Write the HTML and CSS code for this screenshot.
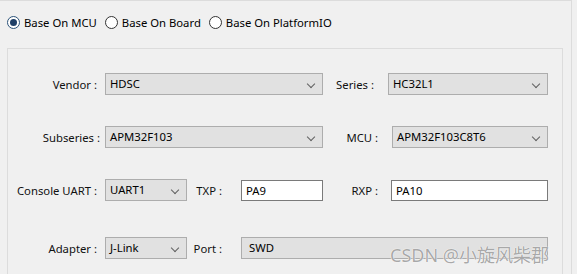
FILE: index.html
```html
<!DOCTYPE html>
<html>
<head>
<meta charset="utf-8">
<link rel="stylesheet" href="styles.css">
</head>
<body>
<div class="outer">
  <div class="radios">
    <label class="radio"><span class="dot checked"></span>Base On MCU</label>
    <label class="radio"><span class="dot"></span>Base On Board</label>
    <label class="radio"><span class="dot"></span>Base On PlatformIO</label>
  </div>
  <div class="group">
    <div class="row r1">
      <span class="lbl w89">Vendor :</span>
      <div class="select ml8 w218">HDSC<i class="chev"></i></div>
      <span class="lbl w51">Series :</span>
      <div class="select ml14 w160">HC32L1<i class="chev"></i></div>
    </div>
    <div class="row r2">
      <span class="lbl w92">Subseries :</span>
      <div class="select ml5 w218">APM32F103<i class="chev"></i></div>
      <span class="lbl w55">MCU :</span>
      <div class="select ml14 w156">APM32F103C8T6<i class="chev"></i></div>
    </div>
    <div class="row r3">
      <span class="lbl w89">Console UART :</span>
      <div class="select ml8 w82">UART1<i class="chev"></i></div>
      <span class="lbl w35">TXP :</span>
      <div class="input ml19 w82">PA9</div>
      <span class="lbl w55">RXP :</span>
      <div class="input ml13 w157">PA10</div>
    </div>
    <div class="row r4">
      <span class="lbl w89">Adapter :</span>
      <div class="select ml8 w82">J-Link<i class="chev"></i></div>
      <span class="lbl w35">Port :</span>
      <div class="field ml19 w307">SWD</div>
    </div>
  </div>
</div>
<div class="watermark">CSDN @小旋风柴郡</div>
</body>
</html>
```
FILE: styles.css
```css
html, body {
  margin: 0;
  padding: 0;
  background: #f0f0f0;
  font-family: "Noto Sans", "Open Sans", "Liberation Sans", sans-serif;
  font-size: 11.3px;
  color: #000;
  overflow: hidden;
  height: 274px;
}
.outer {
  width: 571px;
  height: 273px;
  border-top: 1px solid #dcdcdc;
  border-right: 1px solid #dcdcdc;
  box-sizing: content-box;
  overflow: hidden;
}
.radios {
  display: flex;
  align-items: center;
  height: 20px;
  margin-top: 11px;
  padding-left: 7px;
}
.radio {
  display: flex;
  align-items: center;
  margin-right: 8px;
  white-space: nowrap;
}
.dot {
  width: 11px;
  height: 11px;
  border: 1px solid #333;
  border-radius: 50%;
  background: #fff;
  margin-right: 4px;
  position: relative;
  flex: none;
}
.dot.checked {
  border-color: #2b5278;
}
.dot.checked::after {
  content: "";
  position: absolute;
  left: 2px;
  top: 2px;
  width: 7px;
  height: 7px;
  border-radius: 50%;
  background: #1f3f66;
}
.group {
  margin-top: 16px;
  margin-left: 7px;
  width: 554px;
  height: 240px;
  border: 1px solid #dcdcdc;
  border-bottom: none;
}
.row {
  display: flex;
  align-items: center;
  height: 22px;
}
.r1 { margin-top: 24px; }
.r2 { margin-top: 31px; }
.r3 { margin-top: 31px; }
.r4 { margin-top: 36px; }
.lbl {
  text-align: right;
  white-space: nowrap;
  flex: none;
  color: #111;
}
.w35 { width: 35px; }
.w51 { width: 51px; }
.w55 { width: 55px; }
.w82 { width: 82px; }
.w89 { width: 89px; }
.w92 { width: 92px; }
.w156 { width: 156px; }
.w157 { width: 157px; }
.w160 { width: 160px; }
.w218 { width: 218px; }
.w307 { width: 307px; }
.ml5 { margin-left: 5px; }
.ml8 { margin-left: 8px; }
.ml13 { margin-left: 13px; }
.ml14 { margin-left: 14px; }
.ml19 { margin-left: 19px; }
.select, .input, .field {
  box-sizing: border-box;
  height: 22px;
  line-height: 20px;
  padding-left: 4px;
  position: relative;
  flex: none;
  white-space: nowrap;
}
.select {
  background: #e1e1e1;
  border: 1px solid #adadad;
}
.input {
  background: #fff;
  border: 1px solid #7a7a7a;
  height: 21px;
  line-height: 19px;
  padding-left: 4px;
}
.field {
  background: #e1e1e1;
  border: 1px solid #adadad;
  padding-left: 7px;
}
.chev {
  position: absolute;
  right: 8px;
  top: 7px;
  width: 5px;
  height: 5px;
  border-right: 1px solid #606060;
  border-bottom: 1px solid #606060;
  transform: rotate(45deg);
}
.watermark {
  position: absolute;
  left: 390px;
  top: 241px;
  font-family: "Noto Sans", "Noto Sans CJK SC", sans-serif;
  font-size: 18px;
  color: rgba(140, 140, 140, 0.75);
  text-shadow: 0 0 1px #fff, 0 0 1px #fff;
  white-space: nowrap;
}
```
